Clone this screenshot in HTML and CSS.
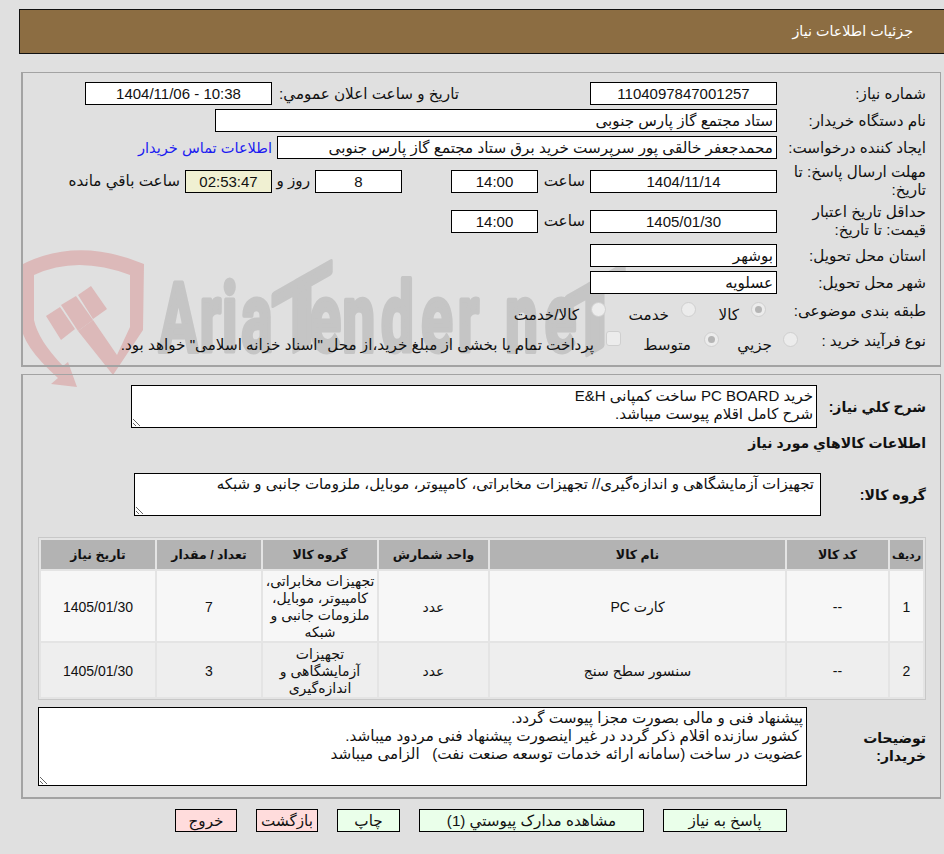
FILE: index.html
```html
<!DOCTYPE html>
<html lang="fa" dir="rtl">
<head>
<meta charset="utf-8">
<title>جزئیات اطلاعات نیاز</title>
<link rel="stylesheet" href="styles.css">
</head>
<body>
<svg class="watermark" viewBox="0 0 944 854" width="944" height="854" aria-hidden="true" direction="ltr">
  <g class="wm-shield">
    <path d="M21 265 Q77 236 144 264 L143 330 L113 375 L78 331 L93 320 L117 355 L130 327 L130 275 Q77 255 34 275 L34 320 Q38 340 63 366 L68 362 L77 387 L51 384 L58 378 Q21 345 21 323 Z"/>
    <path d="M46 316 L60 307 L75 329 L61 340 Z"/>
    <path d="M61 305 L76 296 L93 320 L78 331 Z"/>
    <path d="M78 295 L91 286 L107 309 L93 319 Z"/>
  </g>
  <g class="wm-text" transform="scale(.6 1)">
    <text x="265" y="351">A</text>
    <text x="333" y="351">r</text>
    <text x="370" y="351">i</text>
    <text x="402" y="351">a</text>
    <text x="516" y="351">e</text>
    <text x="571" y="351">n</text>
    <text x="635" y="351">d</text>
    <text x="702" y="351">e</text>
    <text x="763" y="351">r</text>
    <text x="842" y="351">n</text>
    <text x="908" y="351">e</text>
  </g>
  <g class="wm-text">
    <text class="wm-t" x="272" y="351" transform="translate(0 167) skewY(-29.5)">T</text>
    <text class="wm-t" x="565" y="351" transform="translate(0 336) skewY(-29.5)">T</text>
  </g>
</svg>

<header class="title-bar">جزئیات اطلاعات نیاز</header>

<section class="panel panel-info">
  <div class="row row-std">
    <div class="lbl">شماره نیاز:</div>
    <div class="box box-main num">1104097847001257</div>
    <div class="lbl-announce">تاریخ و ساعت اعلان عمومي:</div>
    <div class="box box-main num">10:38 - 1404/11/06</div>
  </div>
  <div class="row row-std">
    <div class="lbl">نام دستگاه خریدار:</div>
    <div class="box box-buyer">ستاد مجتمع گاز پارس جنوبی</div>
  </div>
  <div class="row row-std">
    <div class="lbl">ایجاد کننده درخواست:</div>
    <div class="box box-creator">محمدجعفر خالقی پور سرپرست خرید برق ستاد مجتمع گاز پارس جنوبی</div>
    <a class="contact" href="#">اطلاعات تماس خریدار</a>
  </div>
  <div class="row row-tall">
    <div class="lbl">مهلت ارسال پاسخ: تا تاریخ:</div>
    <div class="box box-main num">1404/11/14</div>
    <div class="unit">ساعت</div>
    <div class="box box-small num">14:00</div>
    <div class="spacer"></div>
    <div class="box box-small num">8</div>
    <div class="unit unit-day">روز و</div>
    <div class="box box-small box-clock num">02:53:47</div>
    <div class="remain">ساعت باقي مانده</div>
  </div>
  <div class="row row-tall">
    <div class="lbl">حداقل تاریخ اعتبار قیمت: تا تاریخ:</div>
    <div class="box box-main num">1405/01/30</div>
    <div class="unit">ساعت</div>
    <div class="box box-small num">14:00</div>
  </div>
  <div class="row row-std row-province">
    <div class="lbl">استان محل تحویل:</div>
    <div class="box box-main box-start">بوشهر</div>
  </div>
  <div class="row row-std">
    <div class="lbl">شهر محل تحویل:</div>
    <div class="box box-main box-start">عسلویه</div>
  </div>
  <div class="row row-check row-cat">
    <div class="lbl">طبقه بندی موضوعی:</div>
    <span class="radio on radio-cat"></span><span class="opt opt-kala">کالا</span>
    <span class="radio"></span><span class="opt opt-khedmat">خدمت</span>
    <span class="radio"></span><span class="opt">کالا/خدمت</span>
  </div>
  <div class="row row-check row-proc">
    <div class="lbl">نوع فرآیند خرید :</div>
    <span class="radio radio-first"></span><span class="opt opt-jozi">جزیي</span>
    <span class="radio on"></span><span class="opt opt-mid">متوسط</span>
    <span class="check"></span><span class="opt">پرداخت تمام یا بخشی از مبلغ خرید،از محل "اسناد خزانه اسلامی" خواهد بود.</span>
  </div>
</section>

<section class="panel panel-goods">
  <div class="row-area row-desc">
    <div class="lbl-b lbl-desc">شرح کلي نیاز:</div>
    <div class="area area-desc">خرید PC BOARD ساخت کمپانی E&amp;H<br>شرح کامل اقلام پیوست میباشد.</div>
  </div>
  <h2 class="goods-title">اطلاعات کالاهاي مورد نیاز</h2>
  <div class="row-area row-group">
    <div class="lbl-b lbl-group">گروه کالا:</div>
    <div class="area area-group">تجهیزات آزمایشگاهی و اندازه‌گیری// تجهیزات مخابراتی، کامپیوتر، موبایل، ملزومات جانبی و شبکه</div>
  </div>
  <table class="goods">
    <thead>
      <tr><th class="c1">ردیف</th><th class="c2">کد کالا</th><th class="c3">نام کالا</th><th class="c4">واحد شمارش</th><th class="c5">گروه کالا</th><th class="c6">تعداد / مقدار</th><th class="c7">تاریخ نیاز</th></tr>
    </thead>
    <tbody>
      <tr class="odd"><td>1</td><td>--</td><td>کارت PC</td><td>عدد</td><td>تجهیزات مخابراتی، کامپیوتر، موبایل، ملزومات جانبی و شبکه</td><td>7</td><td>1405/01/30</td></tr>
      <tr class="even"><td>2</td><td>--</td><td>سنسور سطح سنج</td><td>عدد</td><td>تجهیزات آزمایشگاهی و اندازه‌گیری</td><td>3</td><td>1405/01/30</td></tr>
    </tbody>
  </table>
  <div class="row-area row-notes">
    <div class="lbl-b lbl-notes">توضیحات خریدار:</div>
    <div class="area area-notes">پیشنهاد فنی و مالی بصورت مجزا پیوست گردد.<br>&nbsp;کشور سازنده اقلام ذکر گردد در غیر اینصورت پیشنهاد فنی مردود میباشد.<br>عضویت در ساخت (سامانه ارائه خدمات توسعه صنعت نفت)&nbsp;&nbsp; الزامی میباشد</div>
  </div>
</section>

<nav class="actions">
  <button class="btn btn-green btn-reply">پاسخ به نیاز</button>
  <button class="btn btn-green btn-docs">مشاهده مدارک پیوستي (1)</button>
  <button class="btn btn-green btn-print">چاپ</button>
  <button class="btn btn-red btn-short">بازگشت</button>
  <button class="btn btn-red btn-short">خروج</button>
</nav>
</body>
</html>
```

FILE: styles.css
```css
* { box-sizing: border-box; }
html, body { margin: 0; padding: 0; }
body {
  position: relative;
  width: 944px;
  height: 854px;
  overflow: hidden;
  background: #e0e0e0;
  color: #111;
  font-family: "Liberation Sans", "DejaVu Sans", sans-serif;
  font-size: 15.2px;
  line-height: 18px;
  padding-top: 9px;
}
.watermark { position: absolute; left: 0; top: 0; z-index: 0; }
.wm-shield path { fill: #dcb9b9; }
.wm-text text {
  font-family: Roboto, sans-serif;
  font-weight: 700;
  font-size: 97px;
  fill: #c5c5c5;
  stroke: #c5c5c5;
  stroke-width: 5px;
  stroke-linejoin: round;
}
.title-bar, .panel, .actions { position: relative; z-index: 1; }

.title-bar {
  margin-left: 19px;
  height: 45px;
  padding-right: 31px;
  background: #8c6d42;
  border: 1px solid #111;
  border-right: 0;
  color: #fff;
  font-size: 14.3px;
  line-height: 43px;
}
.panel {
  margin-left: 21px;
  margin-right: 3px;
  border: 1px solid #a3a3a3;
  border-width: 1px 1px 2px 2px;
  padding-right: 14px;
}
.panel-info { margin-top: 18px; height: 295px; padding-top: 9px; }
.panel-goods { margin-top: 7px; height: 425px; padding-top: 10px; }

.row { display: flex; align-items: center; margin-bottom: 4px; }
.row-std { height: 23px; }
.row-tall { height: 36px; }
.row-province { margin-top: 5px; }
.row-check { height: 26px; }
.lbl { width: 149px; flex: none; padding-left: 6px; }
.box {
  flex: none;
  height: 23px;
  line-height: 21px;
  background: #fff;
  border: 1px solid #000;
  padding: 0 3px;
  white-space: nowrap;
  overflow: hidden;
}
.num { text-align: center; font-size: 15px; }
.box-main { width: 187px; }
.box-start { text-align: right; }
.box-buyer { width: 562px; }
.box-creator { width: 500px; }
.box-small { width: 87px; }
.box-clock { background: #f0f0d2; }
.lbl-announce { margin-right: 131px; width: 187px; flex: none; white-space: nowrap; }
.contact { margin-right: 5px; color: #1c1cf0; font-size: 14.6px; text-decoration: none; white-space: nowrap; }
.unit { width: 52px; flex: none; padding-right: 5px; white-space: nowrap; }
.unit-day { width: 43px; }
.spacer { width: 49px; flex: none; }
.remain { margin-right: 5px; white-space: nowrap; }
.radio, .check {
  flex: none;
  width: 15px;
  height: 15px;
  background: #ececec;
  border: 1px solid #cfcfcf;
  margin-top: -3px;
}
.radio { border-radius: 50%; position: relative; }
.radio.on::after {
  content: "";
  position: absolute;
  left: 3px;
  top: 3px;
  width: 7px;
  height: 7px;
  border-radius: 50%;
  background: #b5b5b5;
}
.check { border-radius: 3px; margin-top: -5px; }
.opt { margin-top: 7px; margin-right: 12px; white-space: nowrap; flex: none; }
.radio-cat { margin-right: 11px; }
.opt-kala { width: 43px; }
.opt-khedmat { width: 63px; }
.radio-first { margin-right: -21px; }
.opt-jozi { width: 53px; margin-right: 11px; }
.opt-mid { width: 70px; margin-right: 13px; }

.row-area { display: flex; align-items: center; }
.lbl-b { flex: none; font-weight: 700; font-size: 14px; }
.area {
  flex: none;
  background: #fff;
  border: 1px solid #000;
  padding: 1px 3px;
  overflow: auto;
  resize: both;
}
.lbl-desc { width: 109px; }
.area-desc { width: 686px; height: 43px; font-size: 15px; }
.goods-title { margin: 6px 0 0; height: 18px; font-size: 14px; line-height: 18px; font-weight: 700; }
.row-group { margin-top: 21px; }
.lbl-group { width: 105px; }
.area-group { width: 687px; height: 43px; padding-right: 6px; font-size: 15px; }

.goods {
  margin-top: 21px;
  width: 888px;
  table-layout: fixed;
  border-collapse: separate;
  border-spacing: 2px;
  border: 1px solid #c8c8c8;
  background: #e4e4e4;
}
.goods th {
  height: 29px;
  padding: 0;
  background: #b3b3b3;
  font-size: 12.5px;
  font-weight: 700;
  text-align: center;
  white-space: nowrap;
}
.goods th.c1 { font-size: 11px; }
.goods td { padding: 2px 1px 0; text-align: center; font-size: 14px; line-height: 17px; }
.odd td { height: 70px; background: #f7f7f7; }
.even td { height: 54px; background: #eee; }
.c1 { width: 33px; }
.c2 { width: 101px; }
.c3 { width: 295px; }
.c4 { width: 109px; }
.c5 { width: 114px; }
.c6 { width: 104px; }
.c7 { width: 114px; }

.row-notes { margin-top: 7px; }
.lbl-notes { width: 119px; padding-left: 30px; }
.area-notes { width: 769px; height: 79px; }

.actions { display: flex; gap: 19px; margin-top: 10px; padding-right: 157px; }
.btn {
  height: 23px;
  border: 1px solid #000;
  padding: 0;
  font: inherit;
  color: #111;
  cursor: pointer;
}
.btn-green { background: #eaffea; }
.btn-red { background: #ffdcdc; }
.btn-reply { width: 124px; }
.btn-docs { width: 225px; }
.btn-print { width: 63px; }
.btn-short { width: 62px; }
```
